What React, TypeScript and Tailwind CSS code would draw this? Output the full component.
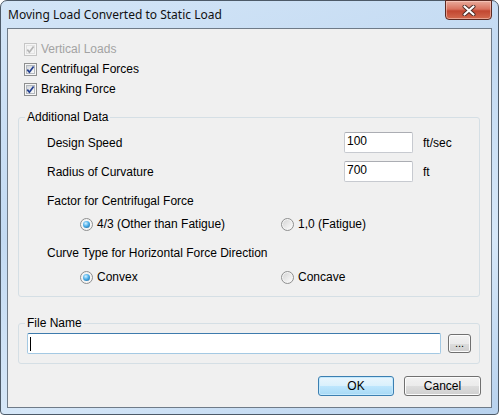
import React from 'react';

const Check = ({ disabled }: { disabled?: boolean }) => (
  <span
    className={`relative flex h-[13px] w-[13px] shrink-0 items-center justify-center border ${
      disabled ? 'border-[#c6c6c6] bg-[#f6f6f6]' : 'border-[#8e8f8f] bg-[#f6f6f6]'
    }`}
  >
    <span
      className={`absolute inset-[1px] border ${
        disabled
          ? 'border-[#e2e2e2] bg-[#f4f4f4]'
          : 'border-[#b3b8be] bg-[linear-gradient(135deg,#d3d6da,#fafafa)]'
      }`}
    />
    <svg viewBox="0 0 11 11" className="relative h-[11px] w-[11px]">
      <path
        d="M2.3 5.6 L4.4 8.2 L8.6 2.4"
        fill="none"
        stroke={disabled ? '#b5b5b5' : '#24408f'}
        strokeWidth="1.7"
      />
    </svg>
  </span>
);

const Radio = ({ on }: { on?: boolean }) => (
  <span className="flex h-[13px] w-[13px] shrink-0 items-center justify-center rounded-full border border-[#8e8f8f] bg-[#f4f4f4]">
    {on ? (
      <span className="h-[7px] w-[7px] rounded-full bg-[radial-gradient(circle_at_40%_35%,#d8f2ff_0%,#4db0ea_45%,#12598f_100%)]" />
    ) : (
      <span className="h-[9px] w-[9px] rounded-full bg-[linear-gradient(135deg,#d6d6d6,#fbfbfb)]" />
    )}
  </span>
);

const Field = ({ value }: { value: string }) => (
  <div className="h-[21px] w-[69px] shrink-0 rounded-[2px] border border-[#c7cad0] border-t-[#abadb3] bg-white pl-[2px] text-[12px] leading-[17px]">
    {value}
  </div>
);

const App: React.FC = () => {
  return (
    <div
      className="flex h-[415px] w-[499px] flex-col rounded-t-[7px] rounded-b-[4px] border border-[#4d5a68] bg-[linear-gradient(160deg,#d3e5f7_0%,#c3daf2_40%,#d6e7f8_70%,#b8d2ee_100%)] px-[6px] pb-[6px] text-black"
      style={{ fontFamily: '"Liberation Sans", Arial, sans-serif' }}
    >
      <div className="flex h-[27px] shrink-0 items-start justify-between">
        <span
          className="pl-[1px] pt-[6px] text-[12px] leading-[16px] text-[#111]"
          style={{ fontFamily: '"Noto Sans", "Liberation Sans", sans-serif' }}
        >
          Moving Load Converted to Static Load
        </span>
        <div className="-mt-[1px] flex h-[20px] w-[47px] items-center justify-center rounded-b-[4px] border border-[#5c2a22] bg-[linear-gradient(#e9ab9c_0%,#d9735f_45%,#c24731_55%,#d36a4f_100%)] shadow-[inset_0_0_0_1px_rgba(255,220,210,0.5)]">
          <svg viewBox="0 0 14 11" className="h-[11px] w-[14px]">
            <path d="M2.5 1.5 L11.5 9.5 M11.5 1.5 L2.5 9.5" stroke="#4a2a24" strokeWidth="4" strokeLinecap="round" />
            <path d="M2.5 1.5 L11.5 9.5 M11.5 1.5 L2.5 9.5" stroke="#ffffff" strokeWidth="2.2" strokeLinecap="round" />
          </svg>
        </div>
      </div>

      <div className="flex flex-1 flex-col border border-[#6f7b88] bg-[#f0f0f0] px-[10px] pt-[10px] text-[12px]">
        <div className="flex flex-col pl-[6px]">
          <label className="flex h-[20px] items-center gap-[4px] text-[#a3a3a3]">
            <Check disabled />
            Vertical Loads
          </label>
          <label className="flex h-[20px] items-center gap-[4px]">
            <Check />
            Centrifugal Forces
          </label>
          <label className="flex h-[20px] items-center gap-[4px]">
            <Check />
            Braking Force
          </label>
        </div>

        <fieldset className="mr-[1px] mt-[11px] rounded-[3px] border border-[#d5dfe5] pb-[9px]">
          <legend className="ml-[6px] px-[2px] text-[12px] leading-[14px]">Additional Data</legend>
          <div className="pl-[28px]">
            <div className="mt-[8px] flex items-center">
              <span className="w-[297px]">Design Speed</span>
              <Field value="100" />
              <span className="ml-[10px]">ft/sec</span>
            </div>
            <div className="mt-[8px] flex items-center">
              <span className="w-[297px]">Radius of Curvature</span>
              <Field value="700" />
              <span className="ml-[10px]">ft</span>
            </div>
            <div className="mt-[9px] flex h-[20px] items-center">Factor for Centrifugal Force</div>
            <div className="mt-[3px] flex h-[20px] items-center pl-[33px]">
              <label className="flex w-[201px] items-center gap-[4px]">
                <Radio on />
                4/3 (Other than Fatigue)
              </label>
              <label className="flex items-center gap-[4px]">
                <Radio />
                1,0 (Fatigue)
              </label>
            </div>
            <div className="mt-[9px] flex h-[20px] items-center">Curve Type for Horizontal Force Direction</div>
            <div className="mt-[4px] flex h-[20px] items-center pl-[33px]">
              <label className="flex w-[201px] items-center gap-[4px]">
                <Radio on />
                Convex
              </label>
              <label className="flex items-center gap-[4px]">
                <Radio />
                Concave
              </label>
            </div>
          </div>
        </fieldset>

        <fieldset className="mr-[1px] mt-[19px] rounded-[3px] border border-[#d5dfe5] pb-[9px]">
          <legend className="ml-[6px] px-[2px] text-[12px] leading-[14px]">File Name</legend>
          <div className="mt-[3px] flex items-center gap-[7px] px-[8px]">
            <div className="flex h-[21px] flex-1 items-center rounded-[2px] border border-[#a4c9e3] border-t-[#3d7bad] bg-white pl-[2px]">
              <span className="h-[14px] w-[1px] bg-black" />
            </div>
            <button className="flex h-[19px] w-[23px] items-end justify-center rounded-[3px] border border-[#707070] bg-[linear-gradient(#f2f2f2_0%,#ebebeb_50%,#dddddd_50%,#cfcfcf_100%)] pb-[3px] text-[11px] leading-[11px] shadow-[inset_0_0_0_1px_#fcfcfc]">
              ...
            </button>
          </div>
        </fieldset>

        <div className="mt-[12px] flex justify-end gap-[10px]">
          <button className="flex h-[20px] w-[76px] items-center justify-center rounded-[3px] border border-[#3c7fb1] bg-[linear-gradient(#eaf6fd_0%,#d9f0fc_50%,#bee6fd_50%,#a7d9f5_100%)] text-[12px] shadow-[inset_0_0_0_1px_#c4e9fd]">
            OK
          </button>
          <button className="flex h-[20px] w-[77px] items-center justify-center rounded-[3px] border border-[#707070] bg-[linear-gradient(#f2f2f2_0%,#ebebeb_50%,#dddddd_50%,#cfcfcf_100%)] text-[12px] shadow-[inset_0_0_0_1px_#fcfcfc]">
            Cancel
          </button>
        </div>
      </div>
    </div>
  );
};

export default App;
